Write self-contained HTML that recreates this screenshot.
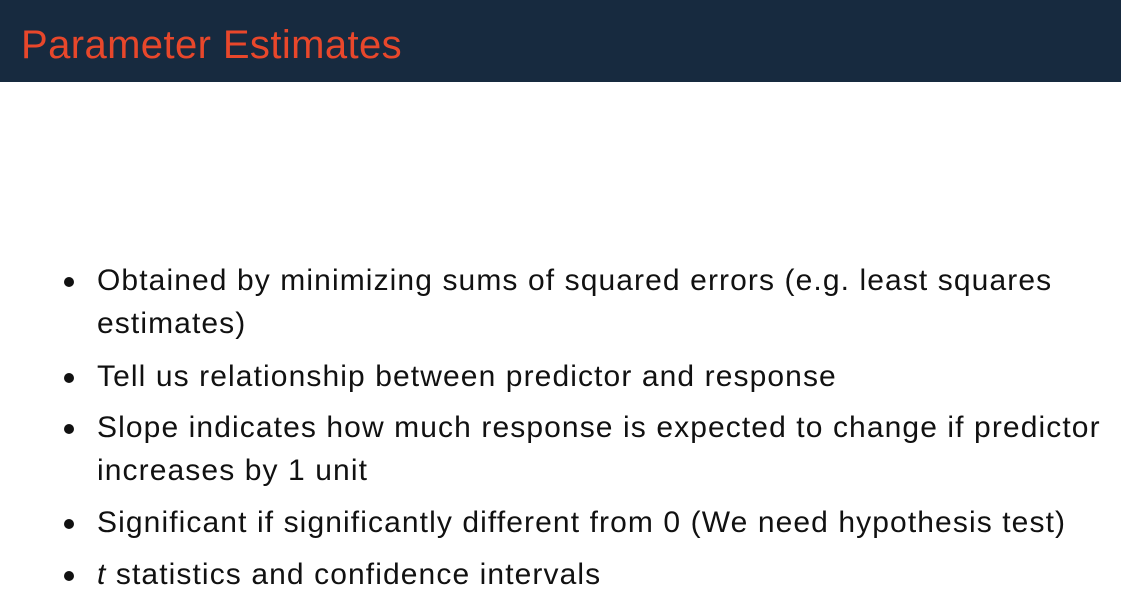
<!DOCTYPE html>
<html><head><style>
body{margin:0;width:1121px;height:606px;background:#fff;position:relative;overflow:hidden;font-family:"Liberation Sans",sans-serif}
.hd{position:absolute;left:0;top:0;width:1121px;height:82px;background:#172a3f}
.tt{position:absolute;left:21px;top:21px;font-size:40px;color:#e8472b;letter-spacing:0.4px;line-height:48px;white-space:nowrap}
.l{position:absolute;left:97px;font-size:30px;letter-spacing:1.1px;color:#111;white-space:nowrap;line-height:34px}
.d{position:absolute;left:64px;width:10px;height:10px;border-radius:50%;background:#111}
</style></head><body>
<div class="hd"></div>
<div class="tt">Parameter Estimates</div>
<div class="d" style="top:277px"></div>
<div class="l" style="top:264px">Obtained by minimizing sums of squared errors (e.g. least squares</div>
<div class="l" style="top:307px">estimates)</div>
<div class="d" style="top:373px"></div>
<div class="l" style="top:360px">Tell us relationship between predictor and response</div>
<div class="d" style="top:424px"></div>
<div class="l" style="top:411px">Slope indicates how much response is expected to change if predictor</div>
<div class="l" style="top:454px">increases by 1 unit</div>
<div class="d" style="top:519px"></div>
<div class="l" style="top:506px">Significant if significantly different from 0 (We need hypothesis test)</div>
<div class="d" style="top:571px"></div>
<div class="l" style="top:558px"><i>t</i> statistics and confidence intervals</div>
</body></html>
